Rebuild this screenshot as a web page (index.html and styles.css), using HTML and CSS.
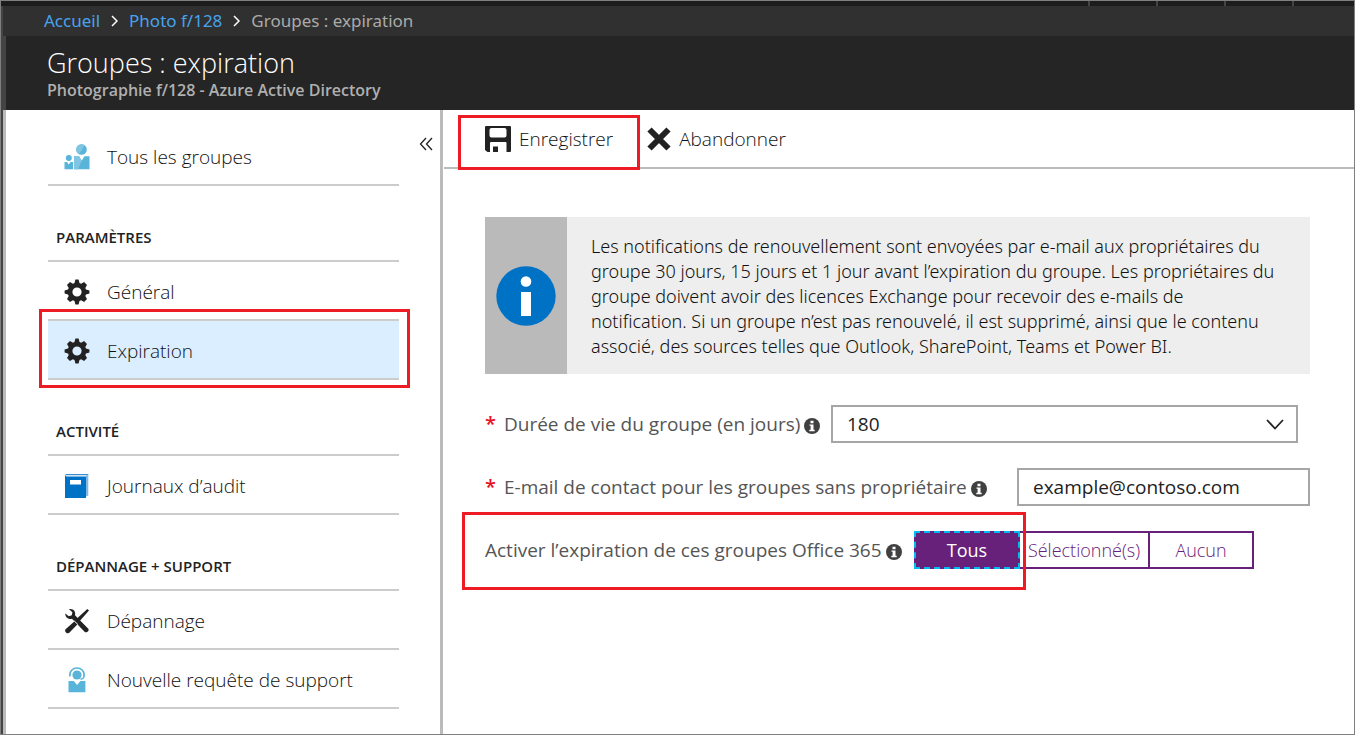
FILE: index.html
```html
<!DOCTYPE html>
<html lang="fr">
<head>
<meta charset="utf-8">
<title>Groupes : expiration</title>
<link rel="stylesheet" href="styles.css">
</head>
<body>
<svg width="0" height="0" class="sprite" aria-hidden="true">
  <symbol id="gear" viewBox="0 0 26 26">
    <path fill-rule="evenodd" d="M10.500 4 11.400 .6h3.200l.9 3.400 1.600.7 3-1.700 2.900 2.900-1.700 3 .7 1.600 3.400.9v3.200l-3.400.9-.7 1.600 1.700 3-2.900 2.900-3-1.700-1.600.7-.9 3.400h-3.200l-.9-3.400-1.600-.7-3 1.700L3 20.100l1.700-3-.7-1.600-3.400-.9v-3.200L4 10.500l.7-1.600L3 5.900 5.900 3l3 1.700ZM13 8.400a4.600 4.600 0 1 0 0 9.200 4.600 4.600 0 0 0 0-9.200Z"/>
  </symbol>
  <symbol id="info" viewBox="0 0 16 16">
    <circle cx="8" cy="8" r="8" fill="#404040"/>
    <path d="M6.500 2.700h3v2.500h-3ZM5.500 6.400h4V11.800h1.200v1.400H5.300v-1.400h1.300V7.800H5.500Z" fill="#fff"/>
  </symbol>
</svg>
<div class="window">
  <div class="topbar"><i></i><i></i><i></i><i></i></div>
  <nav class="crumbs" aria-label="Fil d'Ariane">
    <a href="#">Accueil</a>
    <svg width="7" height="12" viewBox="0 0 7 12"><path d="M1 1l5 5-5 5" fill="none" stroke="#fff" stroke-width="1.500"/></svg>
    <a href="#">Photo f/128</a>
    <svg width="7" height="12" viewBox="0 0 7 12"><path d="M1 1l5 5-5 5" fill="none" stroke="#fff" stroke-width="1.500"/></svg>
    <span>Groupes : expiration</span>
  </nav>
  <header class="title">
    <h1>Groupes : expiration</h1>
    <p>Photographie f/128 - Azure Active Directory</p>
  </header>
  <div class="columns">
    <aside class="side">
      <button class="collapse" type="button" aria-label="Réduire le menu"><svg width="14" height="14" viewBox="0 0 14 14"><path d="M7 1 1.500 7 7 13M13 1 7.500 7 13 13" fill="none" stroke="#222" stroke-width="1.300"/></svg></button>
      <a class="item" href="#">
        <svg width="26" height="26" viewBox="0 0 26 26"><circle cx="17.500" cy="5.500" r="5.300" fill="#59b4d9"/><path d="M12.200 5.500a5.300 5.300 0 0 1 8.500-4.200L15 10.200A5.300 5.300 0 0 1 12.200 5.500Z" fill="#80c6e2"/><circle cx="4.800" cy="14" r="3" fill="#59b4d9"/><path d="M10 12.300h5l2.600 4.500 3-4.500H25.500V25.300H10Z" fill="#59b4d9"/><path d="M10 12.300h5l2.600 4.500L14 25.300h-4Z" fill="#80c6e2"/><path d="M.5 18h2.500l1.800 2.500L6.600 18h2.500v7.300H.5Z" fill="#59b4d9"/></svg>
        <span>Tous les groupes</span></a>
      <h2>PARAMÈTRES</h2>
      <a class="item" href="#"><svg width="26" height="26"><use href="#gear"/></svg><span>Général</span></a>
      <a class="item current" href="#" aria-current="page"><svg width="26" height="26"><use href="#gear"/></svg><span>Expiration</span></a>
      <h2>ACTIVITÉ</h2>
      <a class="item" href="#">
        <svg width="26" height="26" viewBox="0 0 26 26"><path d="M22 2.500h2.300V22.500L22 23.500Z" fill="#7fb9e6"/><path d="M2 1h22.300v1.200H1Z" fill="#3b8fd0"/><path d="M1 2.200 2.500 3.500H22V25H1Z" fill="#0072c6"/><rect x="6" y="7" width="11" height="4.500" fill="#fff"/></svg>
        <span>Journaux d’audit</span></a>
      <h2>DÉPANNAGE + SUPPORT</h2>
      <a class="item" href="#">
        <svg width="26" height="26" viewBox="0 0 26 26"><path d="M5 1.300C9 .3 12 3.500 11 7.300l13.300 13.500c1.300 2-1.500 4.500-3.500 3.200L8 10.800C4.500 12 1 9 1.300 5.500l3.500 2.800 3-1 .6-3Z"/><path d="M23.300 1 25 2.500 15.500 13.300 13.700 14l-1.700-1.500.7-1.700ZM10.300 13.500l3 3-8 8.300c-1 .8-2.300.6-3.300-.4s-1.200-2.200-.4-3.200Z"/><path d="m10 12.600 4.200 4.100" stroke="#fff" stroke-width=".7"/></svg>
        <span>Dépannage</span></a>
      <a class="item" href="#">
        <svg width="26" height="26" viewBox="0 0 26 26"><circle cx="13" cy="8" r="4.600" fill="#59b4d9"/><path d="M6 9.500C5 4 9 1 13 1s8 3 7 8.500c-.3 2-1.500 2.500-3.500 2.800" fill="none" stroke="#59b4d9" stroke-width="1.600"/><path d="M4.500 14h5.300l3.300 4 3.300-4h5v11.300H4.500Z" fill="#59b4d9"/></svg>
        <span>Nouvelle requête de support</span></a>
    </aside>
    <main class="pane">
      <div class="toolbar">
        <button class="cmd marked" type="button">
          <svg width="26" height="26" viewBox="0 0 26 26"><path fill-rule="evenodd" d="M0 1Q0 0 1 0H25Q26 0 26 1V25Q26 26 25 26H21.500V17Q21.500 16 20.500 16H6Q5 16 5 17V26H2.500L0 24ZM6.500 2Q4.500 2 4.500 4V9.500Q4.500 11.500 6.500 11.500H19.500Q21.500 11.500 21.500 9.500V4Q21.500 2 19.500 2ZM8 20.500h5V26H8Z" /></svg>
          <span>Enregistrer</span></button>
        <button class="cmd" type="button">
          <svg width="24" height="24" viewBox="0 0 24 24"><path d="M2.500 2.500l19 19M21.500 2.500l-19 19" stroke="#222" stroke-width="6"/></svg>
          <span>Abandonner</span></button>
      </div>
      <section class="notice">
        <div class="notice-icon"><svg width="60" height="60" viewBox="0 0 60 60"><circle cx="30" cy="30" r="29.700" fill="#0072c6"/><circle cx="30" cy="15.500" r="5.300" fill="#fff"/><path d="M25 26h10v24H25Z" fill="#fff"/></svg></div>
        <p>Les notifications de renouvellement sont envoyées par e-mail aux propriétaires du groupe 30 jours, 15 jours et 1 jour avant l’expiration du groupe. Les propriétaires du groupe doivent avoir des licences Exchange pour recevoir des e-mails de notification. Si un groupe n’est pas renouvelé, il est supprimé, ainsi que le contenu associé, des sources telles que Outlook, SharePoint, Teams et Power BI.</p>
      </section>
      <form class="form">
        <div class="row lifetime">
          <label for="life"><b>*</b><span>Durée de vie du groupe (en jours)</span><svg width="16" height="16"><use href="#info"/></svg></label>
          <div class="select"><select id="life"><option>180</option></select>
            <svg width="18" height="11" viewBox="0 0 18 11"><path d="M1 1l8 8.500L17 1" fill="none" stroke="#222" stroke-width="1.800"/></svg></div>
        </div>
        <div class="row contact">
          <label for="mail"><b>*</b><span>E-mail de contact pour les groupes sans propriétaire</span><svg width="16" height="16"><use href="#info"/></svg></label>
          <input id="mail" type="email" value="example@contoso.com">
        </div>
        <div class="row scope">
          <span class="label" id="scope"><span>Activer l’expiration de ces groupes Office 365</span><svg width="16" height="16"><use href="#info"/></svg></span>
          <div class="choices" role="group" aria-labelledby="scope">
            <button class="on" type="button" aria-pressed="true">Tous</button>
            <button class="wide" type="button" aria-pressed="false">Sélectionné(s)</button>
            <button type="button" aria-pressed="false">Aucun</button>
          </div>
        </div>
      </form>
    </main>
  </div>
</div>
</body>
</html>
```
FILE: styles.css
```css
*, *::after { box-sizing: border-box; }
body, h1, h2, p { margin: 0; }
body {
  font: 300 19px/26px "Open Sans", "Noto Sans", sans-serif;
  color: #111;
  background: #fff;
}
a { color: inherit; text-decoration: none; }
button, input, select { font: inherit; color: inherit; }
svg { display: block; flex: none; }
.sprite { position: absolute; }

.window {
  min-height: 100vh;
  display: flex;
  flex-direction: column;
  border: 1px solid #7f7f7f;
}
.topbar {
  height: 5px;
  background: #1c1c1c;
  display: flex;
  justify-content: flex-end;
  gap: 66px;
  padding-right: 60px;
}
.topbar i { width: 2px; background: #444; }
.crumbs {
  height: 30px;
  display: flex;
  align-items: center;
  gap: 11px;
  padding-left: 41px;
  border-left: 2px solid #444;
  background: #303030;
  color: #aaa;
  font-family: "Noto Sans", sans-serif;
  font-size: 17px;
  font-weight: 400;
}
.crumbs a { color: #47a3ee; }
.title {
  height: 74px;
  padding: 9px 0 0 41px;
  border-left: 5px solid #444;
  background: #252525;
}
.title h1 { font-size: 27px; line-height: 35px; font-weight: 300; color: #fff; }
.title p { font-size: 16px; line-height: 20px; font-weight: 600; color: #b0b0b0; }

.columns {
  flex: 1;
  display: grid;
  grid-template-columns: 442px 1fr;
}
.side {
  position: relative;
  padding: 17px 41px 20px 45px;
  border-left: 2px solid #444;
  border-right: 3px solid #bbb;
  box-shadow: inset 3px 0 #bbb;
}
.collapse {
  position: absolute;
  top: 27px;
  right: 7px;
  padding: 0;
  border: 0;
  background: none;
}
.item {
  position: relative;
  display: flex;
  align-items: center;
  gap: 17px;
  height: 59px;
  padding: 2px 0 0 16px;
  border-bottom: 2px solid #ccc;
}
.item svg { fill: #222; }
.side h2 {
  height: 76px;
  padding: 38px 0 0 8px;
  border-bottom: 2px solid #ccc;
  font-size: 15px;
  font-weight: 600;
  color: #222;
}
.current { background: #dbeeff; }
.current::after, .marked::after, .scope::after {
  content: "";
  position: absolute;
  border: 3px solid #ed1c24;
  pointer-events: none;
}
.current::after { inset: -12px -11px -10px -9px; }

.toolbar {
  height: 59px;
  display: flex;
  align-items: center;
  gap: 34px;
  padding-left: 41px;
  margin-left: 1px;
  border-bottom: 2px solid #bbb;
}
.cmd {
  position: relative;
  display: flex;
  align-items: center;
  gap: 8px;
  padding: 0;
  border: 0;
  background: none;
}
.cmd svg { fill: #222; }
.marked::after { inset: -11px -27px -18px -27px; }

.notice {
  display: flex;
  margin: 48px 44px 31px 42px;
  background: #eee;
}
.notice-icon {
  flex: none;
  width: 82px;
  display: grid;
  place-items: center;
  background: #bababa;
}
.notice p {
  padding: 17px 30px 15px 24px;
  font-family: "Noto Sans", sans-serif;
  font-size: 18px;
  line-height: 25px;
}

.form {
  display: grid;
  gap: 25px;
  padding: 0 44px 0 42px;
  font-weight: 400;
}
.row { position: relative; display: flex; align-items: center; height: 38px; }
label, .label { flex: none; display: flex; align-items: center; gap: 4px; color: #555; }
label svg, .label svg { margin-top: 4px; }
label b { width: 15px; color: #e81123; font-size: 20px; font-weight: 600; }
.lifetime label { width: 346px; }
.contact label { width: 532px; }
.scope .label { width: 429px; }
.select { position: relative; flex: 1; margin-right: 12px; }
.select svg { position: absolute; right: 14px; top: 14px; pointer-events: none; }
select, input {
  width: 100%;
  height: 38px;
  padding: 0 14px;
  border: 2px solid #a6a6a6;
  border-radius: 0;
  background: #fff;
  color: #222;
  appearance: none;
}
.choices { display: flex; color: #68217a; font-size: 18px; font-weight: 300; }
.choices button {
  width: 106px;
  height: 38px;
  margin-right: -2px;
  padding: 0;
  border: 2px solid #68217a;
  background: #fff;
}
.choices .wide { width: 132px; }
.choices .on { background: #68217a; color: #fff; font-weight: 400; border: 2px dashed #00bcf2; z-index: 1; }
.scope::after { left: -23px; top: -19px; width: 564px; height: 78px; z-index: 2; }
```
